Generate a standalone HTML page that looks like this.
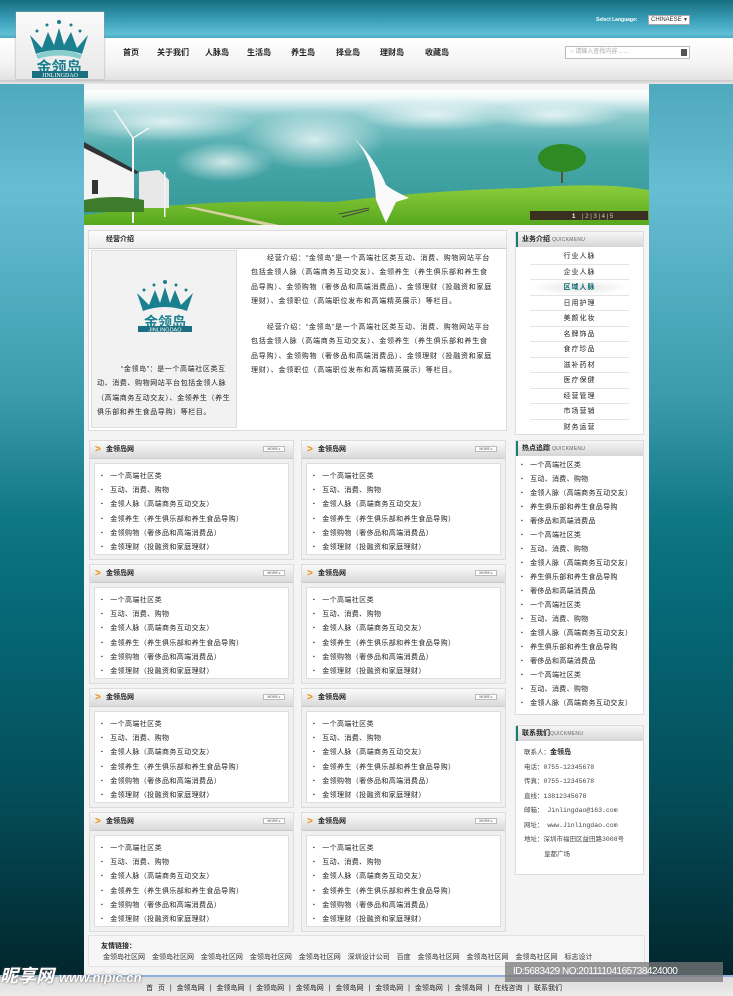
<!DOCTYPE html>
<html><head><meta charset="utf-8"><style>
*{margin:0;padding:0;box-sizing:border-box}
body{width:733px;height:996px;overflow:hidden;position:relative;font-family:"Liberation Sans","Noto Sans CJK SC",sans-serif;font-size:7px;color:#222;
background:linear-gradient(#166f80 0,#3a9fb8 20px,#5fbfd6 34px,#4aa9be 38px,#4fa9bd 84px,#67bdd4 190px,#3a9aab 400px,#0f7684 520px,#066a78 600px,#044c58 800px,#02262d 975px)}
.a{position:absolute}
.top{left:0;top:38px;width:733px;height:42px;background:linear-gradient(#fff,#f4f4f4 60%,#e2e2e2)}
.shadow{left:0;top:80px;width:733px;height:4px;background:linear-gradient(#c8c8c8,#e8e8e8)}
.logo{left:16px;top:12px;width:88px;height:67px;background:linear-gradient(#fafafa,#e8e8e8);box-shadow:0 0 2px #999}
.nav span{position:absolute;top:47px;font-size:8px;font-weight:bold;color:#222}
.page{left:84px;top:84px;width:565px;height:891px;background:#f4f4f4}
.box{background:#f0f0f0;border:1px solid #dcdcdc}
.hd{height:18px;background:linear-gradient(#fafafa,#dadada);border-bottom:1px solid #ccc;font-weight:bold;font-size:7px;line-height:18px;padding-left:16px;position:relative}
.hd i{position:absolute;left:5px;top:0;color:#f08a00;font-style:normal;font-size:10px;font-weight:bold}
.more{position:absolute;right:8px;top:5px;width:22px;height:6px;border:1px solid #bbb;background:#fff;font-size:3.5px;line-height:5px;text-align:center;color:#888}
.in{position:absolute;left:4px;top:22px;right:4px;bottom:4px;background:#fff;border:1px solid #ddd}
.in ul{list-style:none;padding:5px 0 0 6px;letter-spacing:.4px}
.in li{height:14.2px;line-height:14.2px}
.in li:before{content:"▪";font-size:5px;margin-right:7px;vertical-align:1px}
.side-h{height:15px;background:linear-gradient(#f6f6f6,#d6d6d6);border-left:2px solid #1a7b73;font-weight:bold;line-height:15px;padding-left:4px;font-size:7px}
.side-h small{font-size:5px;font-weight:normal;color:#666;letter-spacing:.3px}
.menu div{height:15.5px;line-height:15.5px;text-align:center;border-bottom:1px solid #e4e4e4;margin:0 14px;letter-spacing:1px}
.hot li{list-style:none;height:14px;line-height:14px;padding-left:5px;letter-spacing:.3px}
.hot li:before{content:"▪";font-size:5px;margin-right:7px;vertical-align:1px}
.ct div{height:14.5px;line-height:14.5px;font-family:"Liberation Mono","Noto Sans CJK SC",monospace;font-size:6.5px;color:#444}
.intro{letter-spacing:.75px;line-height:14.3px;text-indent:16px}
</style></head><body>
<div class="a top"></div><div class="a shadow"></div>
<div class="a" style="left:596px;top:17px;font-size:5px;font-weight:bold;color:#fff">Select Language:</div>
<div class="a" style="left:648px;top:15px;width:42px;height:10px;background:#fff;border:1px solid #aaa;font-size:6px;line-height:8px;padding-left:2px;color:#333">CHINAESE <span style="position:absolute;right:1px;top:0;font-size:5px">▼</span></div>
<div class="a logo">
<svg width="88" height="67" viewBox="0 0 88 67"><circle cx="43" cy="10" r="2" fill="#1b7c8c"/><circle cx="31" cy="13" r="1.5" fill="#1b7c8c"/><circle cx="55" cy="13" r="1.5" fill="#1b7c8c"/><circle cx="21" cy="19" r="1.5" fill="#1b7c8c"/><circle cx="64" cy="19" r="1.5" fill="#1b7c8c"/>
<path d="M14 23 L26 36 L32 20 L38 33 L43 16 L48 33 L55 20 L61 36 L72 23 L66 42 Q43 34 20 42 Z" fill="#1a8090"/>
<path d="M20 43 Q43 33 66 43 L64 47 Q43 40 22 47Z" fill="#8cc"/>
<text x="43" y="60" text-anchor="middle" font-size="15" font-weight="bold" fill="#1a8090" font-family="Noto Sans CJK SC">金领岛</text>
<rect x="16" y="59" width="56" height="7" fill="#1a7080"/><text x="44" y="65" text-anchor="middle" font-size="6" fill="#fff" font-family="Liberation Serif">JINLINGDAO</text></svg></div>
<div class="nav"><span style="left:123px">首页</span><span style="left:157px">关于我们</span><span style="left:205px">人脉岛</span><span style="left:247px">生活岛</span><span style="left:291px">养生岛</span><span style="left:336px">择业岛</span><span style="left:380px">理财岛</span><span style="left:425px">收藏岛</span></div>
<div class="a" style="left:565px;top:46px;width:125px;height:13px;background:#fff;border:1px solid #bbb;font-size:6px;line-height:11px;color:#aaa;padding-left:4px">○ 请输入查找内容……<span style="position:absolute;right:2px;top:2px;width:6px;height:7px;background:#555"></span></div>
<div class="a page"></div>
<!-- banner -->
<div class="a" style="left:84px;top:90px;width:565px;height:135px;overflow:hidden;background:linear-gradient(#fff 0,#eef7f7 8px,#8fcccf 25px,#4aa9ab 60px,#3a9c9c 110px)">
<svg width="565" height="135"><defs><radialGradient id="c"><stop offset="0" stop-color="#fff" stop-opacity=".75"/><stop offset="1" stop-color="#fff" stop-opacity="0"/></radialGradient><linearGradient id="g" x1="0" y1="0" x2="0" y2="1"><stop offset="0" stop-color="#8ccc3a"/><stop offset="1" stop-color="#56a81e"/></linearGradient></defs>
<ellipse cx="80" cy="32" rx="90" ry="20" fill="url(#c)"/><ellipse cx="230" cy="50" rx="70" ry="30" fill="url(#c)"/><ellipse cx="140" cy="72" rx="50" ry="20" fill="url(#c)"/><ellipse cx="350" cy="25" rx="80" ry="16" fill="url(#c)"/><ellipse cx="470" cy="25" rx="70" ry="14" fill="url(#c)"/>
<path d="M0 125 Q120 108 250 112 Q350 100 440 98 Q520 92 565 100 L565 135 L0 135Z" fill="url(#g)"/>
<path d="M100 117 L180 135 L195 135 L110 117Z" fill="#d8d0a0"/>
<path d="M0 58 L50 82 L50 118 L0 120Z" fill="#f4f4f4"/><path d="M0 52 L55 82 L52 84 L0 58Z" fill="#333"/><rect x="8" y="90" width="6" height="14" fill="#333"/>
<path d="M55 82 L75 80 L85 90 L85 118 L55 118Z" fill="#e8e8e8"/>
<rect x="48" y="48" width="2" height="85" fill="#f4f4f4"/><path d="M49 48 L30 20 M49 48 L65 38" stroke="#f4f4f4" stroke-width="1.5"/>
<rect x="80" y="82" width="1.5" height="45" fill="#f4f4f4"/>
<path d="M0 110 Q30 104 60 110 L60 122 L0 122Z" fill="#3d7c2a"/>
<path d="M270 48 Q290 70 292 110 L302 133 L312 112 L325 108 Q308 100 302 95 Q292 70 270 48Z" fill="#fafafa"/><path d="M285 118 L255 124 M285 120 L258 127" stroke="#444" stroke-width="1"/>
<rect x="477" y="65" width="2" height="28" fill="#553"/><ellipse cx="478" cy="68" rx="24" ry="14" fill="#2e8a24"/>
<rect x="446" y="121" width="118" height="9" fill="#3a3020"/><text x="488" y="128" font-size="6" fill="#fff" font-weight="bold">1</text><text x="498" y="128" font-size="6" fill="#ccc">| 2 | 3 | 4 | 5</text>
</svg></div>
<!-- intro -->
<div class="a box" style="left:88px;top:230px;width:419px;height:201px;background:#fff">
<div class="hd" style="padding-left:17px;background:linear-gradient(#fdfdfd,#ececec)">经营介绍</div></div>
<div class="a" style="left:91px;top:250px;width:146px;height:178px;background:#f2f2f2;border:1px solid #ddd">
<svg class="a" style="left:40px;top:28px" width="66" height="60" viewBox="0 0 66 60"><circle cx="33" cy="3" r="2" fill="#1b7c8c"/><circle cx="22" cy="6" r="1.5" fill="#1b7c8c"/><circle cx="44" cy="6" r="1.5" fill="#1b7c8c"/><circle cx="12" cy="11" r="1.5" fill="#1b7c8c"/><circle cx="54" cy="11" r="1.5" fill="#1b7c8c"/>
<path d="M5 14 L17 26 L23 11 L28 24 L33 8 L38 24 L43 11 L49 26 L61 14 L55 32 Q33 24 11 32 Z" fill="#1a8090"/><text x="33" y="48" text-anchor="middle" font-size="14" font-weight="bold" fill="#1a8090" font-family="Noto Sans CJK SC">金领岛</text><rect x="6" y="47" width="54" height="6" fill="#1a7080"/><text x="33" y="52.5" text-anchor="middle" font-size="5.5" fill="#fff">JINLINGDAO</text></svg>
<div class="a intro" style="left:5px;top:112px;width:136px;text-indent:24px;letter-spacing:.6px">“金领岛”：是一个高端社区类互动、消费、购物网站平台包括金领人脉（高端商务互动交友）、金领养生（养生俱乐部和养生食品导购）等栏目。</div></div>
<div class="a intro" style="left:251px;top:252px;width:242px">经营介绍：“金领岛”是一个高端社区类互动、消费、购物网站平台包括金领人脉（高端商务互动交友）、金领养生（养生俱乐部和养生食品导购）、金领购物（奢侈品和高端消费品）、金领理财（投融资和家庭理财）、金领职位（高端职位发布和高端精英展示）等栏目。</div>
<div class="a intro" style="left:251px;top:321px;width:242px">经营介绍：“金领岛”是一个高端社区类互动、消费、购物网站平台包括金领人脉（高端商务互动交友）、金领养生（养生俱乐部和养生食品导购）、金领购物（奢侈品和高端消费品）、金领理财（投融资和家庭理财）、金领职位（高端职位发布和高端精英展示）等栏目。</div>
<!-- grid -->
<div class="a box" style="left:89px;top:440px;width:205px;height:120px"><div class="hd"><i>&gt;</i>金领岛网<span class="more">MORE ▸</span></div><div class="in"><ul><li>一个高端社区类</li><li>互动、消费、购物</li><li>金领人脉（高端商务互动交友）</li><li>金领养生（养生俱乐部和养生食品导购）</li><li>金领购物（奢侈品和高端消费品）</li><li>金领理财（投融资和家庭理财）</li></ul></div></div>
<div class="a box" style="left:301px;top:440px;width:205px;height:120px"><div class="hd"><i>&gt;</i>金领岛网<span class="more">MORE ▸</span></div><div class="in"><ul><li>一个高端社区类</li><li>互动、消费、购物</li><li>金领人脉（高端商务互动交友）</li><li>金领养生（养生俱乐部和养生食品导购）</li><li>金领购物（奢侈品和高端消费品）</li><li>金领理财（投融资和家庭理财）</li></ul></div></div>
<div class="a box" style="left:89px;top:564px;width:205px;height:120px"><div class="hd"><i>&gt;</i>金领岛网<span class="more">MORE ▸</span></div><div class="in"><ul><li>一个高端社区类</li><li>互动、消费、购物</li><li>金领人脉（高端商务互动交友）</li><li>金领养生（养生俱乐部和养生食品导购）</li><li>金领购物（奢侈品和高端消费品）</li><li>金领理财（投融资和家庭理财）</li></ul></div></div>
<div class="a box" style="left:301px;top:564px;width:205px;height:120px"><div class="hd"><i>&gt;</i>金领岛网<span class="more">MORE ▸</span></div><div class="in"><ul><li>一个高端社区类</li><li>互动、消费、购物</li><li>金领人脉（高端商务互动交友）</li><li>金领养生（养生俱乐部和养生食品导购）</li><li>金领购物（奢侈品和高端消费品）</li><li>金领理财（投融资和家庭理财）</li></ul></div></div>
<div class="a box" style="left:89px;top:688px;width:205px;height:120px"><div class="hd"><i>&gt;</i>金领岛网<span class="more">MORE ▸</span></div><div class="in"><ul><li>一个高端社区类</li><li>互动、消费、购物</li><li>金领人脉（高端商务互动交友）</li><li>金领养生（养生俱乐部和养生食品导购）</li><li>金领购物（奢侈品和高端消费品）</li><li>金领理财（投融资和家庭理财）</li></ul></div></div>
<div class="a box" style="left:301px;top:688px;width:205px;height:120px"><div class="hd"><i>&gt;</i>金领岛网<span class="more">MORE ▸</span></div><div class="in"><ul><li>一个高端社区类</li><li>互动、消费、购物</li><li>金领人脉（高端商务互动交友）</li><li>金领养生（养生俱乐部和养生食品导购）</li><li>金领购物（奢侈品和高端消费品）</li><li>金领理财（投融资和家庭理财）</li></ul></div></div>
<div class="a box" style="left:89px;top:812px;width:205px;height:120px"><div class="hd"><i>&gt;</i>金领岛网<span class="more">MORE ▸</span></div><div class="in"><ul><li>一个高端社区类</li><li>互动、消费、购物</li><li>金领人脉（高端商务互动交友）</li><li>金领养生（养生俱乐部和养生食品导购）</li><li>金领购物（奢侈品和高端消费品）</li><li>金领理财（投融资和家庭理财）</li></ul></div></div>
<div class="a box" style="left:301px;top:812px;width:205px;height:120px"><div class="hd"><i>&gt;</i>金领岛网<span class="more">MORE ▸</span></div><div class="in"><ul><li>一个高端社区类</li><li>互动、消费、购物</li><li>金领人脉（高端商务互动交友）</li><li>金领养生（养生俱乐部和养生食品导购）</li><li>金领购物（奢侈品和高端消费品）</li><li>金领理财（投融资和家庭理财）</li></ul></div></div>
<!-- sidebar -->
<div class="a" style="left:515px;top:231px;width:129px;height:204px;background:#fff;border:1px solid #ddd">
<div class="side-h">业务介绍 <small>QUICKMENU</small></div>
<div class="menu" style="padding-top:2px"><div>行业人脉</div><div>企业人脉</div><div style="color:#0e6e74;font-weight:bold;background:radial-gradient(ellipse at center,#e4e4e4,#fff 70%)">区域人脉</div><div>日用护理</div><div>美颜化妆</div><div>名牌饰品</div><div>食疗珍品</div><div>滋补药材</div><div>医疗保健</div><div>经营管理</div><div>市场营销</div><div style="border:0">财务运营</div></div></div>
<div class="a" style="left:515px;top:440px;width:129px;height:275px;background:#fff;border:1px solid #ddd">
<div class="side-h">热点追踪 <small>QUICKMENU</small></div>
<ul class="hot" style="padding-top:2px"><li>一个高端社区类</li><li>互动、消费、购物</li><li>金领人脉（高端商务互动交友）</li><li>养生俱乐部和养生食品导购</li><li>奢侈品和高端消费品</li><li>一个高端社区类</li><li>互动、消费、购物</li><li>金领人脉（高端商务互动交友）</li><li>养生俱乐部和养生食品导购</li><li>奢侈品和高端消费品</li><li>一个高端社区类</li><li>互动、消费、购物</li><li>金领人脉（高端商务互动交友）</li><li>养生俱乐部和养生食品导购</li><li>奢侈品和高端消费品</li><li>一个高端社区类</li><li>互动、消费、购物</li><li>金领人脉（高端商务互动交友）</li></ul></div>
<div class="a" style="left:515px;top:725px;width:129px;height:150px;background:#fff;border:1px solid #ddd">
<div class="side-h">联系我们<small>QUICKMENU</small></div>
<div class="ct" style="padding:5px 0 0 8px"><div>联系人：<b style="color:#222;font-size:7px">金领岛</b></div><div>电话：0755-12345678</div><div>传真：0755-12345678</div><div>直线：13812345678</div><div>邮箱： Jinlingdao@163.com</div><div>网址： www.Jinlingdao.com</div><div>地址：深圳市福田区益田路3008号</div><div style="padding-left:20px">皇都广场</div></div></div>
<!-- links -->
<div class="a" style="left:88px;top:935px;width:557px;height:32px;background:#f6f6f6;border:1px solid #e2e2e2">
<div style="position:absolute;left:12px;top:5px;font-weight:bold">友情链接：</div>
<div style="position:absolute;left:14px;top:16px;word-spacing:5px;white-space:nowrap;color:#333">金领岛社区网 金领岛社区网 金领岛社区网 金领岛社区网 金领岛社区网 深圳设计公司 百度 金领岛社区网 金领岛社区网 金领岛社区网 标志设计</div></div>
<div class="a" style="left:0;top:975px;width:733px;height:21px;background:linear-gradient(#dcdcdc,#ececec);border-top:2px solid #8fb1d9"></div>
<div class="a" style="left:146px;top:983px;white-space:nowrap;word-spacing:3px">首 页 | 金领岛网 | 金领岛网 | 金领岛网 | 金领岛网 | 金领岛网 | 金领岛网 | 金领岛网 | 金领岛网 | 在线咨询 | 联系我们</div>
<div class="a" style="left:0;top:962px;font-size:18px;font-weight:bold;font-style:italic;color:#fff;text-shadow:0 0 2px #555">昵享网 <span style="font-size:13px">www.nipic.cn</span></div>
<div class="a" style="left:505px;top:962px;width:218px;height:20px;background:rgba(120,120,120,.75);color:#fff;font-size:10px;line-height:20px;padding-left:8px;letter-spacing:-.5px">ID:5683429 NO:20111104165738424000</div>
</body></html>
